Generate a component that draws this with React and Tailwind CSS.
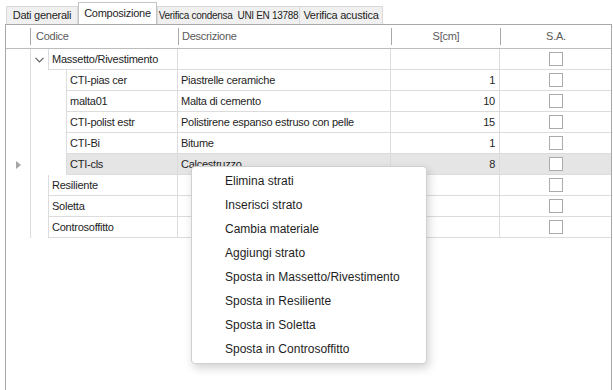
import React from 'react';

const rows = [
  { type: 'group', label: 'Massetto/Rivestimento', open: true },
  { type: 'child', code: 'CTI-pias cer', desc: 'Piastrelle ceramiche', s: '1' },
  { type: 'child', code: 'malta01', desc: 'Malta di cemento', s: '10' },
  { type: 'child', code: 'CTI-polist estr', desc: 'Polistirene espanso estruso con pelle', s: '15' },
  { type: 'child', code: 'CTI-Bi', desc: 'Bitume', s: '1' },
  { type: 'child', code: 'CTI-cls', desc: 'Calcestruzzo', s: '8', selected: true },
  { type: 'group', label: 'Resiliente' },
  { type: 'group', label: 'Soletta' },
  { type: 'group', label: 'Controsoffitto' },
];

const menuItems = [
  'Elimina strati',
  'Inserisci strato',
  'Cambia materiale',
  'Aggiungi strato',
  'Sposta in Massetto/Rivestimento',
  'Sposta in Resiliente',
  'Sposta in Soletta',
  'Sposta in Controsoffitto',
];

const Checkbox = () => (
  <div className="w-[14px] h-[14px] border border-[#ababab] bg-white" />
);

const Row = ({ row }) => {
  const sel = row.selected ? 'bg-[#e5e5e5]' : '';
  return (
    <div className="flex h-[21px]">
      <div className="w-[25px] border-r border-[#dcdcdc] flex items-center justify-center">
        {row.selected && (
          <svg width="5" height="8" viewBox="0 0 5 8">
            <path d="M0 0 L5 4 L0 8 Z" fill="#a6a6a6" />
          </svg>
        )}
      </div>
      <div className="w-[147px] flex">
        {row.type === 'group' ? (
          <div className="w-[17px] flex items-center justify-center">
            {row.open && (
              <svg width="9" height="6" viewBox="0 0 9 6">
                <path d="M0.5 0.8 L4.5 4.8 L8.5 0.8" fill="none" stroke="#606060" strokeWidth="1.2" />
              </svg>
            )}
          </div>
        ) : (
          <div className="w-[35px]" />
        )}
        <div className={`flex-1 border-l border-b border-r border-[#dcdcdc] pl-[3px] flex items-center whitespace-nowrap ${sel}`}>
          {row.type === 'group' ? row.label : row.code}
        </div>
      </div>
      <div className={`w-[213px] border-r border-b border-[#dcdcdc] pl-[3px] flex items-center whitespace-nowrap ${sel}`}>
        {row.desc}
      </div>
      <div className={`w-[109px] border-r border-b border-[#dcdcdc] pr-[4px] flex items-center justify-end ${sel}`}>
        {row.s}
      </div>
      <div className={`flex-1 border-b border-[#dcdcdc] flex items-center justify-center ${sel}`}>
        <Checkbox />
      </div>
    </div>
  );
};

const Tab = ({ label, active, w, extra = '' }) => (
  <div
    className={
      active
        ? `${w} shrink-0 h-[22px] bg-white border border-b-0 border-[#c4c4c4] flex items-center justify-center whitespace-nowrap overflow-hidden ${extra}`
        : `${w} shrink-0 h-[18px] bg-[#f0f0f0] border border-b-0 border-[#d9d9d9] flex items-center justify-center whitespace-nowrap overflow-hidden ${extra}`
    }
  >
    {label}
  </div>
);

export default function App() {
  return (
    <div className="relative w-[613px] h-[390px] bg-white overflow-hidden font-['Liberation_Sans',Arial,sans-serif] text-[11px] tracking-[-0.25px] text-[#1e1e1e]">
      <div className="flex items-end h-[24px] pl-[6px]">
        <Tab label="Dati generali" w="w-[72px]" />
        <Tab label="Composizione" active w="w-[79px]" />
        <Tab label={'Verifica condensa\u00a0\u00a0UNI EN 13788'} w="w-[143px]" extra="text-[10px] tracking-[-0.3px]" />
        <Tab label="Verifica acustica" w="w-[84px]" extra="-ml-px" />
      </div>

      <div className="ml-[5px] w-[607px] h-[366px] border-l border-t border-r border-[#a8a8a8]">
        <div className="flex h-[24px] border-b border-[#bcbcbc] text-[#5a5a5a]">
          <div className="w-[25px] flex items-center justify-end">
            <span className="w-px h-[17px] bg-[#a8a8a8]" />
          </div>
          <div className="w-[147px] flex items-center pl-[5px]">Codice</div>
          <div className="w-[213px] flex items-center">
            <span className="w-px h-[17px] bg-[#a8a8a8] mr-[3px]" />
            Descrizione
          </div>
          <div className="w-[109px] flex items-center">
            <span className="w-px h-[17px] bg-[#a8a8a8]" />
            <span className="flex-1 text-center">S[cm]</span>
          </div>
          <div className="flex-1 flex items-center">
            <span className="w-px h-[17px] bg-[#a8a8a8]" />
            <span className="flex-1 text-center">S.A.</span>
          </div>
        </div>
        {rows.map((r, i) => (
          <Row key={i} row={r} />
        ))}
      </div>

      <div className="absolute left-[191px] top-[166px] w-[236px] py-[2px] bg-white border border-[#d0d0d0] rounded-[4px] shadow-[2px_4px_10px_rgba(0,0,0,0.18)] text-[12px] tracking-normal text-[#1e1e1e]">
        {menuItems.map((m) => (
          <div key={m} className="h-[24px] pl-[33px] flex items-center">
            {m}
          </div>
        ))}
      </div>
    </div>
  );
}
